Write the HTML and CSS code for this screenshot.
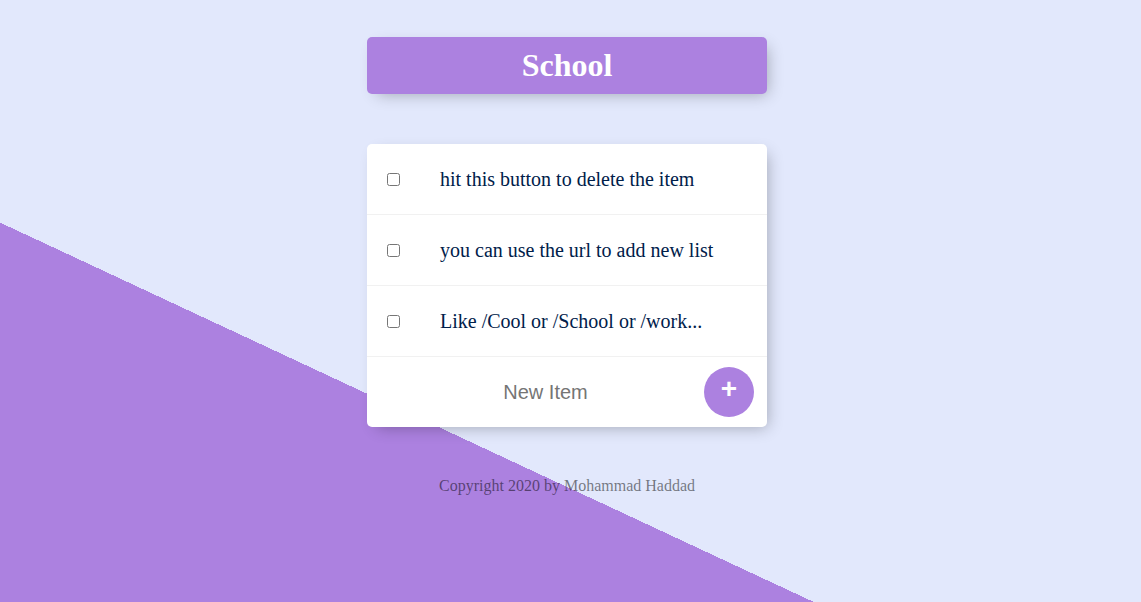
FILE: index.html
```html
<!DOCTYPE html>
<html lang="en">
<head>
<meta charset="utf-8">
<meta name="viewport" content="width=device-width, initial-scale=1">
<title>School</title>
<link rel="stylesheet" href="styles.css">
</head>
<body>
<header class="box heading"><h1>School</h1></header>
<main class="box">
  <div class="item">
    <input class="check" type="checkbox" id="item-1">
    <label class="item-text" for="item-1">hit this button to delete the item</label>
  </div>
  <div class="item">
    <input class="check" type="checkbox" id="item-2">
    <label class="item-text" for="item-2">you can use the url to add new list</label>
  </div>
  <div class="item">
    <input class="check" type="checkbox" id="item-3">
    <label class="item-text" for="item-3">Like /Cool or /School or /work...</label>
  </div>
  <form class="item new-item">
    <input class="new-text" type="text" placeholder="New Item" aria-label="New Item" autocomplete="off">
    <button class="add" type="button" aria-label="Add item">+</button>
  </form>
</main>
<footer class="footer">Copyright 2020 by Mohammad Haddad</footer>
</body>
</html>
```
FILE: styles.css
```css
* {
  box-sizing: border-box;
}

html {
  min-height: 100%;
  background: linear-gradient(25deg, #ac81e0 calc(50% - 170px), #e2e8fc calc(50% - 170px));
}

body {
  margin: 0;
  padding: 37px 7px 0 0;
  font-family: "Liberation Serif", "Times New Roman", serif;
}

.box {
  max-width: 400px;
  margin: 0 auto 50px;
  background: #fff;
  border-radius: 5px;
  box-shadow: 5px 5px 15px -5px rgba(0, 0, 0, 0.3);
}

.heading {
  padding: 10px;
  background: #ac81e0;
  text-align: center;
}

h1 {
  margin: 0;
  color: #fff;
  font-size: 32px;
  line-height: 37px;
}

.item {
  display: flex;
  align-items: center;
  min-height: 71px;
  border-bottom: 1px solid #f1f1f1;
}

.check {
  flex: none;
  margin: 20px;
}

.item-text {
  padding: 20px;
  color: #00204a;
  font-size: 20px;
  line-height: 23px;
}

.new-item {
  min-height: 70px;
  padding: 0 13px 0 20px;
  border-bottom: 0;
}

.new-text {
  flex: 1;
  min-width: 0;
  height: 60px;
  border: 0;
  background: transparent;
  font-family: "Liberation Sans", Arial, sans-serif;
  font-size: 20px;
  text-align: center;
}

.add {
  flex: none;
  width: 50px;
  height: 50px;
  padding: 0 0 6px;
  border: 0;
  border-radius: 50%;
  background: #ac81e0;
  color: #fff;
  font-family: "Liberation Sans", Arial, sans-serif;
  font-size: 28px;
  font-weight: 700;
}

.footer {
  color: rgba(0, 0, 0, 0.5);
  font-size: 16px;
  line-height: 18px;
  text-align: center;
}
```
